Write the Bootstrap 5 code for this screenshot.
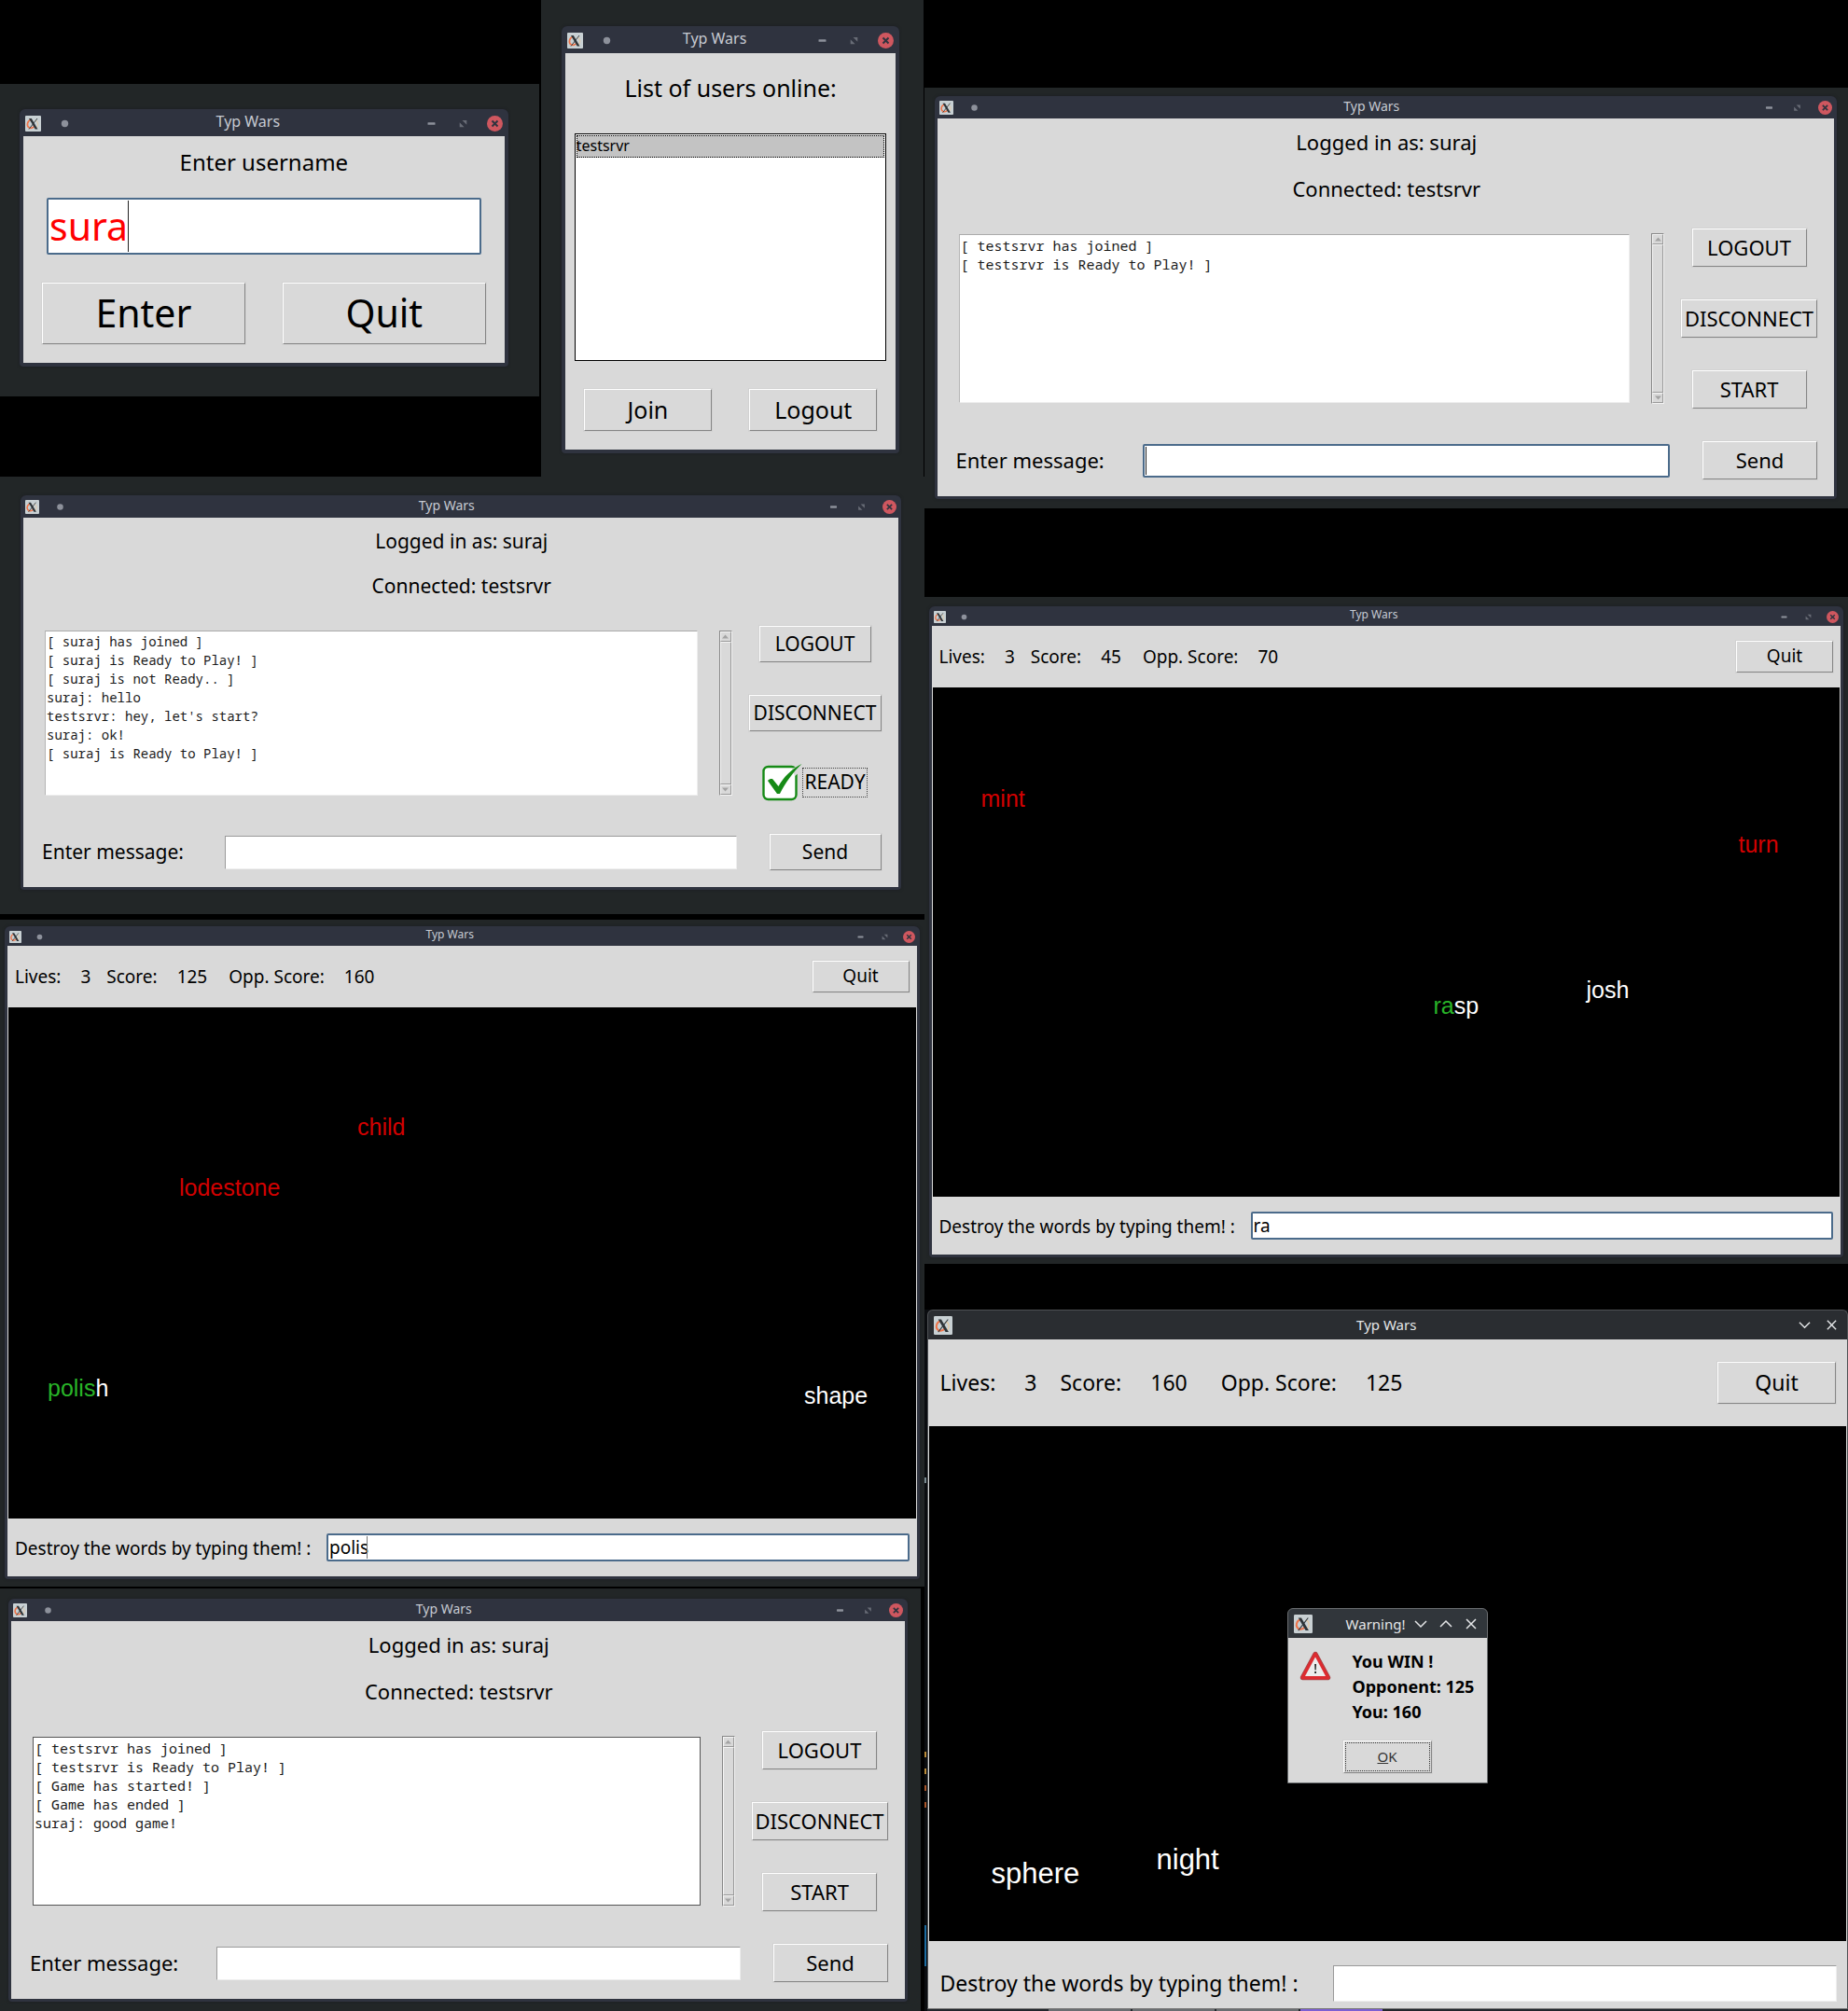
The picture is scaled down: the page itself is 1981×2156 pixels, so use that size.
<!DOCTYPE html>
<html lang="en">
<head>
<meta charset="utf-8">
<meta name="viewport" content="width=device-width, initial-scale=1">
<title>Typ Wars</title>
<link href="https://cdn.jsdelivr.net/npm/bootstrap@5.3.0/dist/css/bootstrap.min.css" rel="stylesheet">
<style>
body { background: #000; color: #000; font-family: "Noto Sans", "Open Sans", sans-serif; }
button, input, textarea, select { font-family: inherit; color: inherit; }

/* desktop areas */
.desk { background: #222627; }
.top-row { display: grid; grid-template-columns: 580fr 411fr; }
.desk-login { margin: 90px 2px 86px 0; padding: 27px 33px 32px 21px; }
.desk-users { padding: 28px 26px 25px 22px; }
.desk-ready { padding: 20px 25px 26px 22px; }
.desk-game-a { margin-top: 6px; padding: 7px 5px 8px 5px; }
.desk-end { margin: 2px 4px 0 0; padding: 11px 14px 10px 9px; }
.desk-chat { margin-top: 94px; padding: 9px 12px 10px 11px; }
.desk-game-b { margin-top: 95px; padding: 10px 5px 7px 5px; }
.desk-win { margin-top: 49px; padding-left: 3px; background-color: #0b0d10; background-repeat: no-repeat; background-size: 2px 44px, 2px 6px, 2px 6px, 2px 6px, 2px 6px, 2px 6px; background-position: 0 660px, 0 180px, 0 474px, 0 492px, 0 510px, 0 528px; background-image: linear-gradient(#1c6ca1, #1c6ca1), linear-gradient(#7a8a90, #7a8a90), linear-gradient(#b98b3a, #b98b3a), linear-gradient(#b98b3a, #b98b3a), linear-gradient(#a8552a, #a8552a), linear-gradient(#a8552a, #a8552a); }

/* window frame */
.win { --bar: 24px; --ico: 15px; --edge: 3px; --title: 14px; background: #2f333f; border-radius: 6px 6px 4px 4px; padding: 0 var(--edge) var(--edge); box-shadow: 0 0 3px #1b1d24; }
.win-lg { --bar: 29px; --ico: 17px; --edge: 4px; --title: 16px; }
.win-sm { --bar: 21px; --ico: 13px; --title: 12px; }
.bar { height: var(--bar); gap: var(--ico); padding: 1px 2px 0; }
.bar svg { width: var(--ico); height: var(--ico); flex: none; display: block; }
.bar-title { font-size: var(--title); line-height: 18px; color: #c6cad2; text-align: center; padding-bottom: 4px; }
.bar-btn { border: 0; padding: 0; background: none; line-height: 0; }
.pane { background: #d9d9d9; }

/* classic toolkit controls */
.tk-btn { background: #d9d9d9; border: 1px solid; border-color: #fff #858585 #858585 #fff; padding: 0 0 2px; text-align: center; white-space: nowrap; outline: 1px solid #d2d2d2; }
.tk-entry { background: #fff; border: 1px solid; border-color: #9a9a9a #eee #eee #9a9a9a; border-radius: 0; padding: 0 2px; width: 100%; display: block; outline: 0; }
.tk-entry.on { border: 2px solid #4b6b8b; border-radius: 2px; padding: 0 1px; }
.caret { position: absolute; width: 1px; background: #222; top: 3px; bottom: 3px; left: 3px; }

/* login */
.login { padding: 11px 20px 20px; }
.login label { font-size: 24px; line-height: 34px; }
.login .tk-entry { height: 61px; font-size: 41px; color: #f00; }
.login .field { margin: 21px 5px 30px; }
.login .caret { left: 87px; }
.login .tk-btn { height: 66px; font-size: 41px; line-height: 60px; flex: 1 1 0; }
.login .pair { gap: 40px; }

/* user list */
.users { padding: 20px 10px 20px; font-size: 25px; }
.users label { line-height: 34px; margin-bottom: 32px; }
.users select { width: 100%; height: 244px; border: 1px solid #000; border-radius: 0; padding: 1px; background: #fff; font-size: 16px; overflow: hidden; outline: 0; display: block; }
.users option { padding: 0; line-height: 24px; min-height: 24px; color: #000; outline: 1px dotted #000; outline-offset: -1px; }
.users option:checked { background: #c3c3c3 linear-gradient(#c3c3c3, #c3c3c3); color: #000; }
.users .pair { gap: 40px; padding: 30px 10px 0; }
.users .tk-btn { height: 45px; flex: 1 1 0; line-height: 40px; }

/* chat */
.chat { --bh: 41px; --side: 146px; --gap: 20px; --lab: 200px; --btn: 123px; padding: 10px 18px 18px 20px; font-size: 22px; }
.chat-short { --bh: 39px; --side: 142px; --gap: 18px; --lab: 196px; --btn: 120px; font-size: 21px; }
.chat p { line-height: 30px; margin: 0 0 var(--gap); text-align: center; }
.chat p + p { margin-bottom: 28px; }
.chat .side { width: var(--side); margin-left: 18px; gap: 35px; }
.chat .tk-btn { width: var(--btn); height: var(--bh); line-height: 36px; }
.chat .tk-btn.wide { width: 100%; }
.chat-log { flex: 1 1 0; min-width: 0; margin: 6px 23px 6px 3px; padding: 1px 1px; background: #fff; border: 1px solid; border-color: #aaa #eee #eee #b5b5b5; resize: none; overflow: hidden; outline: 0; font: 15px/20px "Noto Sans Mono", "DejaVu Sans Mono", monospace; color: #1a1a1a; }
.chat-short .chat-log { font-size: 14px; margin-top: 5px; margin-bottom: 5px; }
.chat-log.on { border-color: #555; }
.tk-scroll { width: 14px; margin: 5px 0; border: 1px solid; border-color: #888 #f2f2f2 #f2f2f2 #888; }
.tk-scroll span { display: block; border: 1px solid; border-color: #f5f5f5 #999 #999 #f5f5f5; }
.tk-scroll .arrow { height: 11px; line-height: 0; }
.tk-scroll svg { display: block; margin: auto; }
.chat .send { margin-top: 35px; }
.chat-short .send { margin-top: 36px; }
.chat .send label { width: var(--lab); line-height: 30px; padding-bottom: 2px; }
.chat .send .tk-entry { height: 36px; }
.chat .send .field { margin-right: 35px; }
.tick { height: 39px; }
.tick svg { width: 43px; height: 40px; flex: none; }
.tick input { position: absolute; inset: 0; opacity: 0; }
.tick span { border: 1px dotted #444; line-height: 28px; height: 32px; padding: 0 1px; }

/* game */
.game { font-size: 19px; --x: 8px; --val: 21px; --a: 17px; --b: 23px; }
.game .head { height: 66px; padding: 0 8px 0 var(--x); }
.game .head b { font-weight: 400; margin-left: var(--val); }
.game .stat { margin-right: var(--b); white-space: nowrap; }
.game .stat:first-child { margin-right: var(--a); }
.game .tk-btn { width: 104px; height: 34px; line-height: 30px; }
.game .foot { height: 62px; padding: 0 8px 0 var(--x); }
.game .foot label { width: 334px; padding-top: 2px; }
.game .tk-entry { height: 30px; }
.arena { background: #000; color: #fff; height: 548px; margin: 0 1px; font: 25px/25px "Liberation Sans", Arial, sans-serif; }
.arena-b { height: 546px; }
.word { position: absolute; white-space: nowrap; }
.foe { color: #d20000; }
.hit { color: #28b428; }
.game .caret { left: 43px; background: #777; }
.at-child { left: 374px; top: 116px; }
.at-lodestone { left: 183px; top: 181px; }
.at-polish { left: 42px; top: 396px; }
.at-shape { left: 853px; top: 404px; }
.at-mint { left: 52px; top: 107px; }
.at-turn { left: 864px; top: 156px; }
.at-josh { left: 701px; top: 312px; }
.at-rasp { left: 537px; top: 329px; }

/* large game window */
.kwin { background: #2a2d31; border: 1px solid #4e5154; border-bottom-color: #777; border-radius: 6px 6px 0 0; }
.kbar { height: 31px; color: #e4e6e8; font-size: 15px; padding: 0 10px 0 6px; }
.kbar svg { display: block; }
.kwin-title { padding-left: 24px; }
.game-big { font-size: 23px; --x: 13px; --val: 31px; --a: 25px; --b: 36px; }
.game-big .head { height: 93px; padding-right: 12px; }
.game-big .tk-btn { width: 127px; height: 45px; line-height: 40px; }
.game-big .foot { height: 72px; padding: 18px 11px 0 var(--x); }
.game-big .foot label { width: 421px; padding-top: 0; }
.game-big .tk-entry { height: 39px; }
.game-big .arena { height: 552px; font-size: 31px; line-height: 31px; }
.at-sphere { left: 67px; top: 464px; }
.at-night { left: 244px; top: 449px; }
.note { position: absolute; left: 384px; top: 195px; width: 215px; border: 1px solid #6a6d70; border-radius: 6px 6px 0 0; background: #31363b; font: 15px/20px "Noto Sans", sans-serif; color: #000; }
.note .kbar { background: none; gap: 9px; }
.note .msg { font-size: 18px; line-height: 27px; font-weight: 700; padding-top: 12px; }
.note .tri { margin: 14px 23px 0 12px; flex: none; }
.game-big .note .tk-btn { width: 95px; height: 35px; color: #333; padding: 1px; margin: 17px 0 10px; line-height: 28px; }
.note .tk-btn span { display: block; border: 1px dotted #333; height: 31px; }
.tasks { height: 3px; padding-left: 130px; gap: 2px; background: #22262b; }
.tasks i { width: 88px; background: #6a6d71; }
.tasks i:last-child { background: #7d5fd3; }
</style>
<script src="https://cdn.jsdelivr.net/npm/bootstrap@5.3.0/dist/js/bootstrap.bundle.min.js"></script>
</head>
<body>
<svg width="0" height="0" class="position-absolute" aria-hidden="true">
  <symbol id="x-app" viewBox="0 0 17 17"><rect width="17" height="17" rx="1" fill="#c8d0d3"/><path d="M6.500 4.500C2 5.500 1 11 4.500 13 6.500 14 9 12.500 10.500 11" fill="none" stroke="#ef7348" stroke-width="1.700"/><path d="M11 5c3 1 3.500 5 1.500 7.500" fill="none" stroke="#e8c9a0" stroke-width="1"/><path d="M4 3h2.800l6.700 11.500h-2.800z" fill="#2e3438"/><path d="M13 3l-9 11.500" stroke="#2e3438" stroke-width=".9"/></symbol>
  <symbol id="x-dot" viewBox="0 0 17 17"><circle cx="8.500" cy="8.500" r="3.700" fill="#8d919b"/></symbol>
  <symbol id="x-min" viewBox="0 0 17 17"><rect x="4.500" y="7.200" width="8" height="2.600" rx=".6" fill="#8d919b"/></symbol>
  <symbol id="x-max" viewBox="0 0 17 17"><path d="M7.500 5H12.300V9.800zM4.700 7.300V12.200H9.600z" fill="#686c76"/></symbol>
  <symbol id="x-close" viewBox="0 0 17 17"><circle cx="8.500" cy="8.500" r="8.500" fill="#cf575f"/><path d="M5.500 5.500l6 6m0-6l-6 6" stroke="#30343f" stroke-width="2"/></symbol>
  <symbol id="k-down" viewBox="0 0 14 14"><path d="M1 4l6 6 6-6" fill="none" stroke="#e4e6e8" stroke-width="1.500"/></symbol>
  <symbol id="k-up" viewBox="0 0 14 14"><path d="M1 10l6-6 6 6" fill="none" stroke="#e4e6e8" stroke-width="1.500"/></symbol>
  <symbol id="k-x" viewBox="0 0 14 14"><path d="M2 2l10 10M12 2L2 12" fill="none" stroke="#e4e6e8" stroke-width="1.500"/></symbol>
  <symbol id="s-up" viewBox="0 0 7 9"><path d="M0 6.500L3.500 2.500 7 6.500z" fill="#a3a3a3"/></symbol>
  <symbol id="s-down" viewBox="0 0 7 9"><path d="M0 2.500L3.500 6.500 7 2.500z" fill="#a3a3a3"/></symbol>
</svg>

<div class="d-flex">
<main class="w-50">
  <div class="top-row">
    <section class="desk desk-login">
      <div class="win win-lg">
        <header class="bar d-flex align-items-center"><svg><use href="#x-app"/></svg><svg><use href="#x-dot"/></svg><span class="bar-title flex-fill">Typ Wars</span><button class="bar-btn" aria-label="Minimize"><svg><use href="#x-min"/></svg></button><button class="bar-btn" aria-label="Maximize"><svg><use href="#x-max"/></svg></button><button class="bar-btn" aria-label="Close"><svg><use href="#x-close"/></svg></button></header>
        <div class="pane login">
          <label for="user" class="d-block text-center">Enter username</label>
          <div class="field position-relative"><input id="user" class="tk-entry on" type="text" value="sura"><span class="caret"></span></div>
          <div class="pair d-flex"><button class="tk-btn">Enter</button><button class="tk-btn">Quit</button></div>
        </div>
      </div>
    </section>
    <section class="desk desk-users">
      <div class="win win-lg">
        <header class="bar d-flex align-items-center"><svg><use href="#x-app"/></svg><svg><use href="#x-dot"/></svg><span class="bar-title flex-fill">Typ Wars</span><button class="bar-btn" aria-label="Minimize"><svg><use href="#x-min"/></svg></button><button class="bar-btn" aria-label="Maximize"><svg><use href="#x-max"/></svg></button><button class="bar-btn" aria-label="Close"><svg><use href="#x-close"/></svg></button></header>
        <div class="pane users">
          <label for="online" class="d-block text-center">List of users online:</label>
          <select id="online" size="10"><option selected>testsrvr</option></select>
          <div class="pair d-flex"><button class="tk-btn">Join</button><button class="tk-btn">Logout</button></div>
        </div>
      </div>
    </section>
  </div>

  <section class="desk desk-ready">
    <div class="win">
      <header class="bar d-flex align-items-center"><svg><use href="#x-app"/></svg><svg><use href="#x-dot"/></svg><span class="bar-title flex-fill">Typ Wars</span><button class="bar-btn" aria-label="Minimize"><svg><use href="#x-min"/></svg></button><button class="bar-btn" aria-label="Maximize"><svg><use href="#x-max"/></svg></button><button class="bar-btn" aria-label="Close"><svg><use href="#x-close"/></svg></button></header>
      <div class="pane chat chat-short">
        <p>Logged in as: suraj</p>
        <p>Connected: testsrvr</p>
        <div class="d-flex">
          <textarea class="chat-log" readonly aria-label="Chat log">[ suraj has joined ]
[ suraj is Ready to Play! ]
[ suraj is not Ready.. ]
suraj: hello
testsrvr: hey, let's start?
suraj: ok!
[ suraj is Ready to Play! ]</textarea>
          <div class="tk-scroll d-flex flex-column"><span class="arrow"><svg width="7" height="9"><use href="#s-up"/></svg></span><span class="flex-fill"></span><span class="arrow"><svg width="7" height="9"><use href="#s-down"/></svg></span></div>
          <div class="side d-flex flex-column align-items-center">
            <button class="tk-btn">LOGOUT</button>
            <button class="tk-btn wide">DISCONNECT</button>
            <label class="tick d-flex align-items-center position-relative"><input type="checkbox" checked><svg viewBox="0 0 43 40"><rect x="1.500" y="3" width="35" height="35" rx="5" fill="#fff" stroke="#168a16" stroke-width="2.400"/><path d="M32 5L43 0 40 9 35 13z" fill="#d9d9d9"/><path d="M6 18c2-2 4-2.500 5.500-1.500L17.500 24C23 14 32 5 42.500 0 33 9 25 20 19 32h-3z" fill="#168a16"/></svg><span>READY</span></label>
          </div>
        </div>
        <div class="send d-flex align-items-center">
          <label for="msg1">Enter message:</label>
          <div class="field flex-fill position-relative"><input id="msg1" class="tk-entry" type="text"></div>
          <button class="tk-btn">Send</button>
        </div>
      </div>
    </div>
  </section>

  <section class="desk desk-game-a">
    <div class="win win-sm">
      <header class="bar d-flex align-items-center"><svg><use href="#x-app"/></svg><svg><use href="#x-dot"/></svg><span class="bar-title flex-fill">Typ Wars</span><button class="bar-btn" aria-label="Minimize"><svg><use href="#x-min"/></svg></button><button class="bar-btn" aria-label="Maximize"><svg><use href="#x-max"/></svg></button><button class="bar-btn" aria-label="Close"><svg><use href="#x-close"/></svg></button></header>
      <div class="pane game">
        <div class="head d-flex align-items-center"><span class="stat">Lives:<b>3</b></span><span class="stat">Score:<b>125</b></span><span class="stat">Opp. Score:<b>160</b></span><button class="tk-btn ms-auto">Quit</button></div>
        <div class="arena position-relative"><span class="word foe at-child">child</span><span class="word foe at-lodestone">lodestone</span><span class="word at-polish"><span class="hit">polis</span>h</span><span class="word at-shape">shape</span></div>
        <div class="foot d-flex align-items-center"><label for="type1">Destroy the words by typing them! :</label><div class="flex-fill position-relative"><input id="type1" class="tk-entry on" type="text" value="polis"><span class="caret"></span></div></div>
      </div>
    </div>
  </section>

  <section class="desk desk-end">
    <div class="win">
      <header class="bar d-flex align-items-center"><svg><use href="#x-app"/></svg><svg><use href="#x-dot"/></svg><span class="bar-title flex-fill">Typ Wars</span><button class="bar-btn" aria-label="Minimize"><svg><use href="#x-min"/></svg></button><button class="bar-btn" aria-label="Maximize"><svg><use href="#x-max"/></svg></button><button class="bar-btn" aria-label="Close"><svg><use href="#x-close"/></svg></button></header>
      <div class="pane chat">
        <p>Logged in as: suraj</p>
        <p>Connected: testsrvr</p>
        <div class="d-flex">
          <textarea class="chat-log on" readonly aria-label="Chat log">[ testsrvr has joined ]
[ testsrvr is Ready to Play! ]
[ Game has started! ]
[ Game has ended ]
suraj: good game!</textarea>
          <div class="tk-scroll d-flex flex-column"><span class="arrow"><svg width="7" height="9"><use href="#s-up"/></svg></span><span class="flex-fill"></span><span class="arrow"><svg width="7" height="9"><use href="#s-down"/></svg></span></div>
          <div class="side d-flex flex-column align-items-center">
            <button class="tk-btn">LOGOUT</button>
            <button class="tk-btn wide">DISCONNECT</button>
            <button class="tk-btn">START</button>
          </div>
        </div>
        <div class="send d-flex align-items-center">
          <label for="msg2">Enter message:</label>
          <div class="field flex-fill position-relative"><input id="msg2" class="tk-entry" type="text"></div>
          <button class="tk-btn">Send</button>
        </div>
      </div>
    </div>
  </section>
</main>

<aside class="w-50">
  <section class="desk desk-chat">
    <div class="win">
      <header class="bar d-flex align-items-center"><svg><use href="#x-app"/></svg><svg><use href="#x-dot"/></svg><span class="bar-title flex-fill">Typ Wars</span><button class="bar-btn" aria-label="Minimize"><svg><use href="#x-min"/></svg></button><button class="bar-btn" aria-label="Maximize"><svg><use href="#x-max"/></svg></button><button class="bar-btn" aria-label="Close"><svg><use href="#x-close"/></svg></button></header>
      <div class="pane chat">
        <p>Logged in as: suraj</p>
        <p>Connected: testsrvr</p>
        <div class="d-flex">
          <textarea class="chat-log" readonly aria-label="Chat log">[ testsrvr has joined ]
[ testsrvr is Ready to Play! ]</textarea>
          <div class="tk-scroll d-flex flex-column"><span class="arrow"><svg width="7" height="9"><use href="#s-up"/></svg></span><span class="flex-fill"></span><span class="arrow"><svg width="7" height="9"><use href="#s-down"/></svg></span></div>
          <div class="side d-flex flex-column align-items-center">
            <button class="tk-btn">LOGOUT</button>
            <button class="tk-btn wide">DISCONNECT</button>
            <button class="tk-btn">START</button>
          </div>
        </div>
        <div class="send d-flex align-items-center">
          <label for="msg3">Enter message:</label>
          <div class="field flex-fill position-relative"><input id="msg3" class="tk-entry on" type="text"><span class="caret"></span></div>
          <button class="tk-btn">Send</button>
        </div>
      </div>
    </div>
  </section>

  <section class="desk desk-game-b">
    <div class="win win-sm">
      <header class="bar d-flex align-items-center"><svg><use href="#x-app"/></svg><svg><use href="#x-dot"/></svg><span class="bar-title flex-fill">Typ Wars</span><button class="bar-btn" aria-label="Minimize"><svg><use href="#x-min"/></svg></button><button class="bar-btn" aria-label="Maximize"><svg><use href="#x-max"/></svg></button><button class="bar-btn" aria-label="Close"><svg><use href="#x-close"/></svg></button></header>
      <div class="pane game">
        <div class="head d-flex align-items-center"><span class="stat">Lives:<b>3</b></span><span class="stat">Score:<b>45</b></span><span class="stat">Opp. Score:<b>70</b></span><button class="tk-btn ms-auto">Quit</button></div>
        <div class="arena arena-b position-relative"><span class="word foe at-mint">mint</span><span class="word foe at-turn">turn</span><span class="word at-josh">josh</span><span class="word at-rasp"><span class="hit">ra</span>sp</span></div>
        <div class="foot d-flex align-items-center"><label for="type2">Destroy the words by typing them! :</label><div class="flex-fill"><input id="type2" class="tk-entry on" type="text" value="ra"></div></div>
      </div>
    </div>
  </section>

  <section class="desk-win">
    <div class="kwin">
      <header class="kbar d-flex align-items-center"><svg width="20" height="20"><use href="#x-app"/></svg><span class="kwin-title flex-fill text-center">Typ Wars</span><button class="bar-btn me-3" aria-label="Minimize"><svg width="13" height="13"><use href="#k-down"/></svg></button><button class="bar-btn" aria-label="Close"><svg width="13" height="13"><use href="#k-x"/></svg></button></header>
      <div class="pane game game-big">
        <div class="head d-flex align-items-center"><span class="stat">Lives:<b>3</b></span><span class="stat">Score:<b>160</b></span><span class="stat">Opp. Score:<b>125</b></span><button class="tk-btn ms-auto">Quit</button></div>
        <div class="arena position-relative">
          <span class="word at-sphere">sphere</span><span class="word at-night">night</span>
          <div class="note" role="alertdialog" aria-label="Warning!">
            <header class="kbar d-flex align-items-center"><svg width="20" height="20"><use href="#x-app"/></svg><span class="flex-fill text-end">Warning!</span><button class="bar-btn me-1" aria-label="Minimize"><svg width="14" height="14"><use href="#k-down"/></svg></button><button class="bar-btn me-1" aria-label="Maximize"><svg width="14" height="14"><use href="#k-up"/></svg></button><button class="bar-btn" aria-label="Close"><svg width="14" height="14"><use href="#k-x"/></svg></button></header>
            <div class="pane">
              <div class="d-flex align-items-start">
                <svg class="tri" width="34" height="33" viewBox="0 0 34 33"><path d="M17 3.500L30.500 28.500H3.500z" fill="#f0f0f0" stroke="#a3474a" stroke-width="5.400" stroke-linejoin="round"/><path d="M17 3.500L30.500 28.500H3.500z" fill="none" stroke="#dc2b30" stroke-width="3.800" stroke-linejoin="round"/><path d="M17 6.500L28 27H6z" fill="#ececec"/><path d="M16.200 14h1.800l-.3 6.500h-1.200zM16.200 22h1.800v2h-1.800z" fill="#222"/></svg>
                <div class="msg">You WIN !<br>Opponent: 125<br>You: 160</div>
              </div>
              <div class="text-center"><button class="tk-btn"><span><u>O</u>K</span></button></div>
            </div>
          </div>
        </div>
        <div class="foot d-flex align-items-center"><label for="type3">Destroy the words by typing them! :</label><div class="flex-fill"><input id="type3" class="tk-entry" type="text"></div></div>
      </div>
    </div>
    <div class="tasks d-flex"><i></i><i></i><i></i><i></i></div>
  </section>
</aside>
</div>
</body>
</html>
